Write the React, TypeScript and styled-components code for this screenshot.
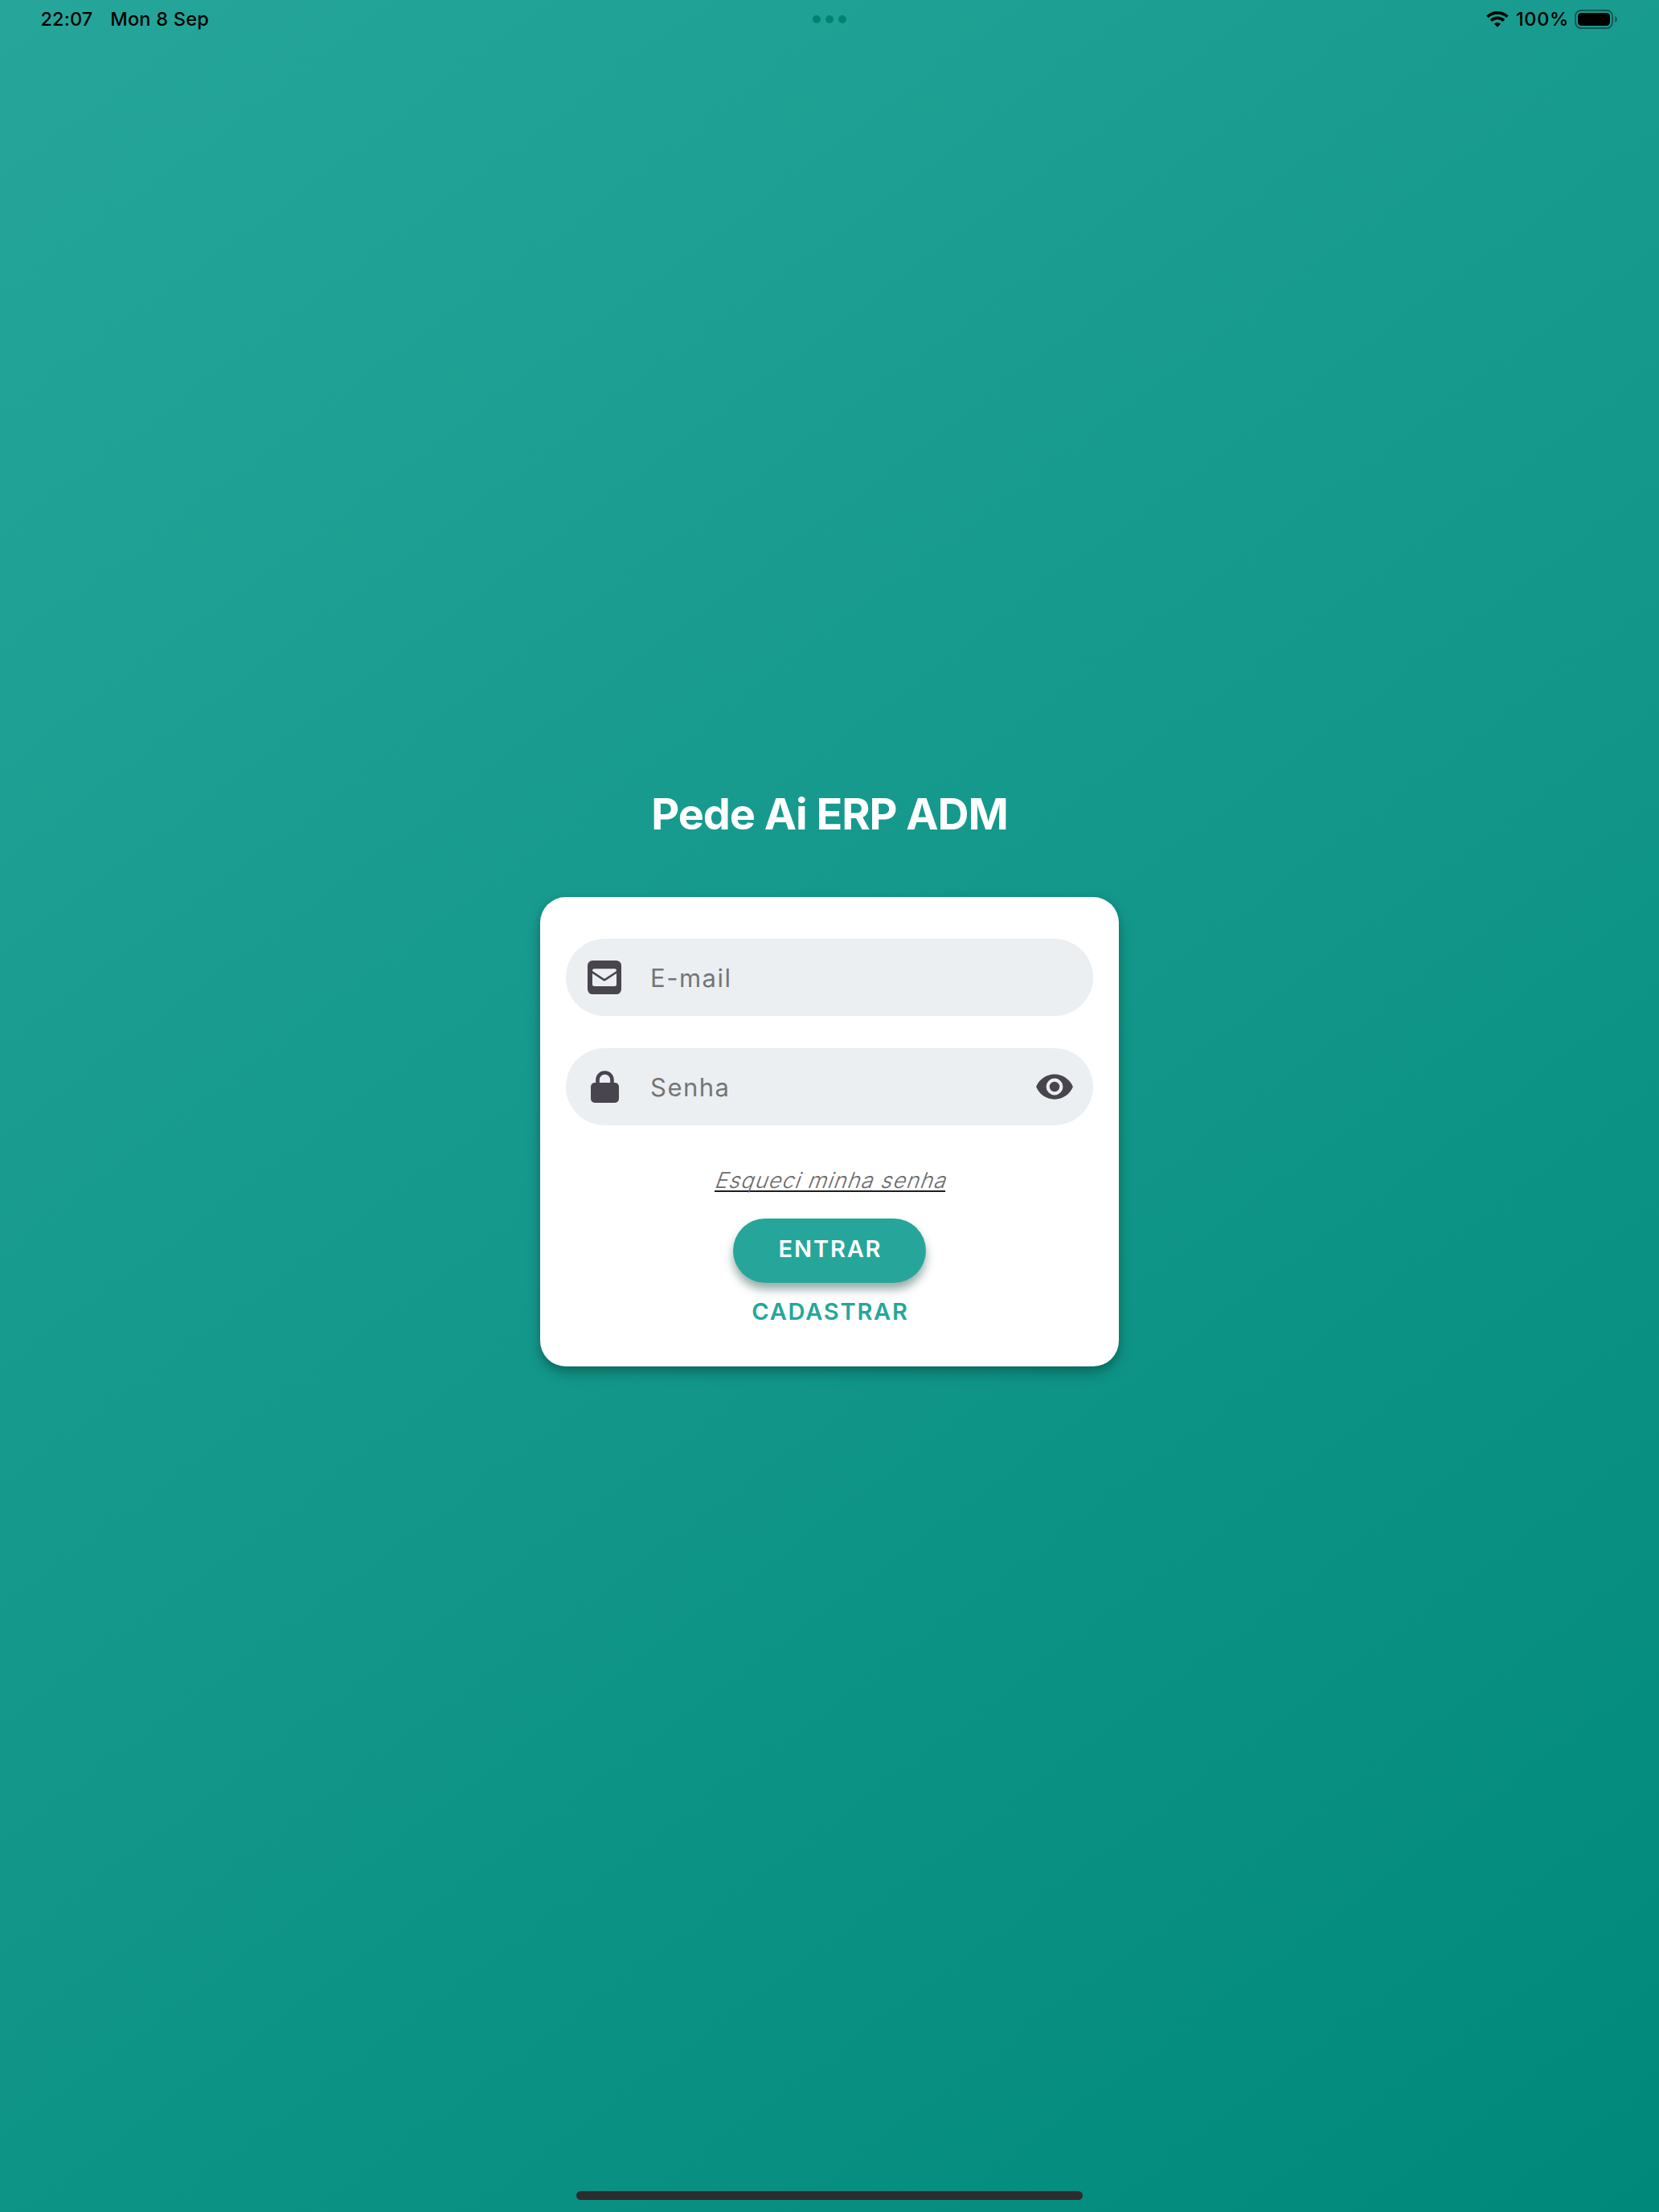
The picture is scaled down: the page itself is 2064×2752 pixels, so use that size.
import React from "react";
import styled, { createGlobalStyle } from "styled-components";

const GlobalStyle = createGlobalStyle`
  * { box-sizing: border-box; }
  html, body { margin: 0; padding: 0; }
  body { font-family: Inter, "Liberation Sans", sans-serif; }
`;

const ICON = "#49454f";

const Screen = styled.div`
  width: 2064px;
  height: 2752px;
  display: flex;
  flex-direction: column;
  align-items: center;
  overflow: hidden;
  background: linear-gradient(143.13deg, #26a69a 0%, #00897b 100%);
`;

const StatusBar = styled.header`
  width: 100%;
  height: 48px;
  padding: 0 51px;
  display: grid;
  grid-template-columns: 1fr auto 1fr;
  align-items: center;
  color: #000;
`;

const StatusLeft = styled.div`
  display: flex;
  gap: 22px;
  margin-left: -0.5px;
`;

const StatusRight = styled.div`
  display: flex;
  align-items: center;
  justify-content: flex-end;
  padding-right: 1px;
`;

const StatusText = styled.span<{ $spacing?: number }>`
  font-size: 23.5px;
  font-weight: 500;
  line-height: 48px;
  letter-spacing: ${(p) => p.$spacing ?? 0}px;
  white-space: nowrap;
`;

const Dots = styled.div`
  display: flex;
  gap: 6px;
`;

const Dot = styled.span`
  width: 10px;
  height: 10px;
  border-radius: 50%;
  background: #008072;
`;

const Percent = styled(StatusText)`
  margin: 0 7px 0 9px;
`;

const Main = styled.main`
  flex: 1;
  display: flex;
  flex-direction: column;
  align-items: center;
  padding-top: 933px;
`;

const Title = styled.h1`
  margin: 0 0 71px;
  font-size: 54px;
  line-height: 64px;
  font-weight: 700;
  letter-spacing: -1.05px;
  color: #fff;
  white-space: nowrap;
`;

const Card = styled.form`
  width: 720px;
  height: 584px;
  padding: 52px 32px 0;
  display: flex;
  flex-direction: column;
  align-items: center;
  border-radius: 32px;
  background: #fff;
  box-shadow: 0 8px 16px rgba(0, 0, 0, 0.26), 0 2px 8px rgba(0, 0, 0, 0.08);
`;

const Field = styled.label`
  width: 100%;
  height: 96px;
  margin-bottom: 40px;
  padding: 0 23px;
  display: flex;
  align-items: center;
  border-radius: 48px;
  background: #ebeff2;
`;

const IconSlot = styled.span`
  width: 50px;
  height: 50px;
  display: flex;
  align-items: center;
  justify-content: center;
`;

const Input = styled.input<{ $spacing: number }>`
  flex: 1;
  min-width: 0;
  height: 60px;
  margin-left: 32px;
  padding: 0;
  border: 0;
  outline: 0;
  background: transparent;
  font-family: inherit;
  font-size: 31px;
  letter-spacing: ${(p) => p.$spacing}px;
  color: #1c1b1f;
  &::placeholder { color: #757575; opacity: 1; }
`;

const Forgot = styled.a`
  margin-top: 8px;
  width: 287px;
  height: 35px;
  display: flex;
  justify-content: center;
  border-bottom: 2px solid #1c1b1f;
`;

const ForgotText = styled.span`
  font-size: 27px;
  line-height: 42px;
  font-weight: 300;
  letter-spacing: 1.1px;
  margin-left: 9px;
  color: #6a6a6a;
  white-space: nowrap;
  transform: skewX(-20deg);
`;

const Submit = styled.button`
  width: 240px;
  height: 80px;
  margin: 33px 0 0;
  padding: 0 0 5px 2px;
  border: 0;
  border-radius: 40px;
  background: #26a69a;
  box-shadow: 0 8px 12px rgba(0, 60, 50, 0.42);
  font-family: inherit;
  font-size: 29px;
  font-weight: 600;
  letter-spacing: 1.85px;
  color: #fff;
`;

const Register = styled.a`
  margin-top: 12px;
  padding-left: 2px;
  font-size: 29px;
  line-height: 48px;
  font-weight: 600;
  letter-spacing: 1.8px;
  color: #26a69a;
`;

const HomeIndicator = styled.div`
  width: 630px;
  height: 11px;
  margin-bottom: 15px;
  border-radius: 6px;
  background: #2d2d2d;
`;

const WifiIcon = () => (
  <svg width="28" height="20" viewBox="0 0 28 20" fill="none" stroke="#000" strokeWidth="3.6">
    <path d="M1.4 6.9a18.2 18.2 0 0 1 25.2 0" />
    <path d="M6 11.6a11.6 11.6 0 0 1 16 0" />
    <path d="M14 19.8l-4.1-4.2a6 6 0 0 1 8.2 0z" fill="#000" stroke="none" />
  </svg>
);

const BatteryIcon = () => (
  <svg width="53" height="24" viewBox="0 0 53 24">
    <rect x="1" y="1" width="46" height="22" rx="7" fill="none" stroke="#000" strokeOpacity=".42" strokeWidth="2" />
    <rect x="4" y="4" width="40" height="16" rx="4.5" fill="#000" />
    <path d="M50 8c1.8.7 3 2.2 3 4s-1.200 3.300-3 4z" fill="#000" fillOpacity=".42" />
  </svg>
);

const MailIcon = () => (
  <svg width="42" height="42" viewBox="0 0 126 126">
    <rect width="126" height="126" rx="19" fill={ICON} />
    <rect x="18" y="31" width="90" height="65" rx="7" fill="#ebeff2" />
    <path d="M16 42.500L63 73L110 42.500" fill="none" stroke={ICON} strokeWidth="7.500" strokeLinejoin="round" />
  </svg>
);

const LockIcon = () => (
  <svg width="35" height="40" viewBox="0 0 105 120">
    <rect y="45" width="105" height="75" rx="15" fill={ICON} />
    <path d="M25.500 52V34.500a27 27 0 0 1 54 0V52" fill="none" stroke={ICON} strokeWidth="14" />
  </svg>
);

const EyeIcon = () => (
  <svg width="50" height="50" viewBox="0 0 24 24" fill={ICON}>
    <path d="M12 9a3 3 0 0 0-3 3 3 3 0 0 0 3 3 3 3 0 0 0 3-3 3 3 0 0 0-3-3m0 8a5 5 0 0 1-5-5 5 5 0 0 1 5-5 5 5 0 0 1 5 5 5 5 0 0 1-5 5m0-12.500C7 4.500 2.730 7.610 1 12c1.730 4.390 6 7.500 11 7.500s9.270-3.110 11-7.500c-1.730-4.390-6-7.500-11-7.500z" />
  </svg>
);

export default function App() {
  return (
    <>
      <GlobalStyle />
      <Screen>
        <StatusBar>
          <StatusLeft>
            <StatusText $spacing={0.1}>22:07</StatusText>
            <StatusText $spacing={0.25}>Mon 8 Sep</StatusText>
          </StatusLeft>
          <Dots>
            <Dot />
            <Dot />
            <Dot />
          </Dots>
          <StatusRight>
            <WifiIcon />
            <Percent $spacing={0.65}>100%</Percent>
            <BatteryIcon />
          </StatusRight>
        </StatusBar>
        <Main>
          <Title>Pede Ai ERP ADM</Title>
          <Card>
            <Field>
              <IconSlot><MailIcon /></IconSlot>
              <Input type="email" placeholder="E-mail" $spacing={1.5} />
            </Field>
            <Field>
              <IconSlot><LockIcon /></IconSlot>
              <Input type="password" placeholder="Senha" $spacing={1.5} />
              <IconSlot><EyeIcon /></IconSlot>
            </Field>
            <Forgot>
              <ForgotText>Esqueci minha senha</ForgotText>
            </Forgot>
            <Submit type="button">ENTRAR</Submit>
            <Register>CADASTRAR</Register>
          </Card>
        </Main>
        <HomeIndicator />
      </Screen>
    </>
  );
}
